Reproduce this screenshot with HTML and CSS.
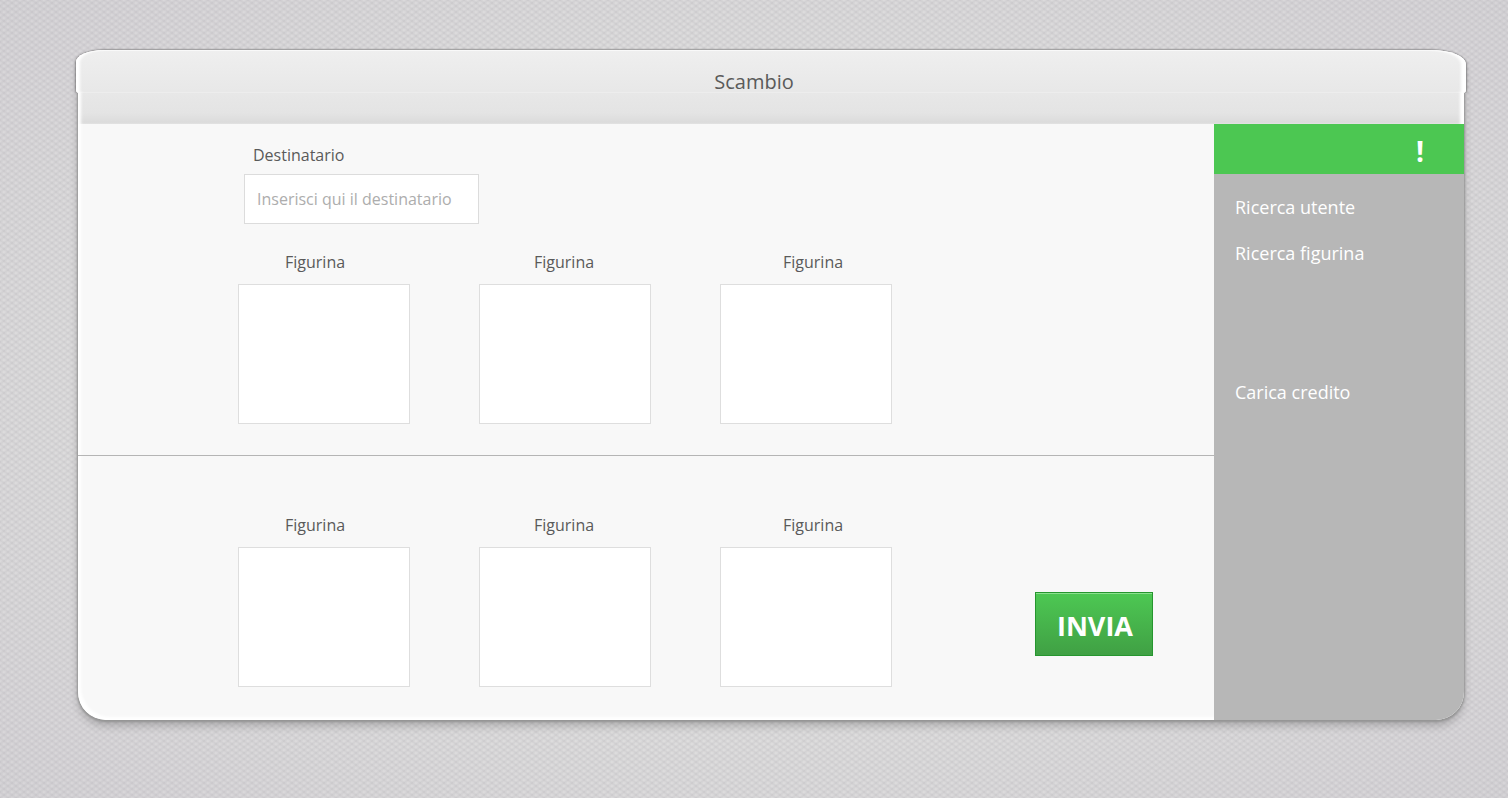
FILE: index.html
```html
<!DOCTYPE html>
<html lang="it">
<head>
<meta charset="utf-8">
<title>Scambio</title>
<link rel="stylesheet" href="styles.css">
</head>
<body>
<div class="panel">
  <header class="panel-header"><h1 class="title">Scambio</h1></header>
  <div class="panel-body">
    <form class="content">
      <section class="offer">
        <div class="recipient">
          <label class="recipient-label" for="destinatario">Destinatario</label>
          <input class="recipient-input" id="destinatario" type="text" placeholder="Inserisci qui il destinatario">
        </div>
        <div class="captions">
          <span class="caption" id="o1">Figurina</span>
          <span class="caption" id="o2">Figurina</span>
          <span class="caption" id="o3">Figurina</span>
        </div>
        <div class="slots">
          <div class="slot" role="group" aria-labelledby="o1"></div>
          <div class="slot" role="group" aria-labelledby="o2"></div>
          <div class="slot" role="group" aria-labelledby="o3"></div>
        </div>
      </section>
      <section class="request">
        <div class="captions">
          <span class="caption" id="r1">Figurina</span>
          <span class="caption" id="r2">Figurina</span>
          <span class="caption" id="r3">Figurina</span>
        </div>
        <div class="slots">
          <div class="slot" role="group" aria-labelledby="r1"></div>
          <div class="slot" role="group" aria-labelledby="r2"></div>
          <div class="slot" role="group" aria-labelledby="r3"></div>
          <button class="send" type="submit">INVIA</button>
        </div>
      </section>
    </form>
    <aside class="sidebar">
      <div class="alert"><button class="alert-button" type="button">!</button></div>
      <nav class="menu">
        <a class="menu-link" href="#utente">Ricerca utente</a>
        <a class="menu-link" href="#figurina">Ricerca figurina</a>
        <a class="menu-link menu-link-credit" href="#credito">Carica credito</a>
      </nav>
    </aside>
  </div>
</div>
</body>
</html>
```

FILE: styles.css
```css
* { box-sizing: border-box; }

body {
  margin: 0;
  min-height: 100vh;
  display: flex;
  padding: 50px 44px 78px 78px;
  font-family: "Open Sans", "Noto Sans", sans-serif;
  font-size: 16px;
  line-height: 24px;
  color: #5a5a5a;
  background:
    radial-gradient(ellipse 4px 3px at 50% 50%, rgba(130, 126, 135, .26), transparent) 0 0 / 8px 6px,
    radial-gradient(ellipse 4px 3px at 50% 50%, rgba(130, 126, 135, .26), transparent) 4px 3px / 8px 6px,
    radial-gradient(ellipse at center, #e7e7e5 0, #e5e5e4 50%, #dcdadd 100%);
}

.panel {
  flex: 1;
  display: flex;
  flex-direction: column;
  border-radius: 28px 36px 28px 28px / 12px 14px 28px 28px;
  box-shadow: 0 1px 2px 1px #959595, 0 6px 8px rgba(0, 0, 0, .2);
}

.panel-header {
  position: relative;
  z-index: 0;
  height: 74px;
  padding-top: 18px;
  text-align: center;
  border-radius: 28px 36px 0 0 / 12px 14px 0 0;
  background: linear-gradient(#efefef, #e4e4e4 85%, #dadada);
  box-shadow: inset 4px 1px 3px -1px #fff, inset -5px 0 3px -1px #fff;
}

/* Raised lip that overhangs the panel on both sides */
.panel-header::before {
  content: "";
  position: absolute;
  z-index: -1;
  inset: 0 -2px auto;
  height: 43px;
  border-radius: 28px 36px 3px 3px / 12px 14px 3px 3px;
  background: linear-gradient(#efefef, #e4e4e4 85%, #dadada) 0 0 / 100% 74px;
  box-shadow: inset 5px 0 3px -1px #fff, inset -6px 0 3px -1px #fff, inset 0 1px #f8f8f8, -1px 0 2px rgba(0, 0, 0, .3), 1px 0 2px rgba(0, 0, 0, .3);
  clip-path: inset(-2px -4px 0);
}

.title {
  margin: 0;
  padding-right: 34px;
  font-size: 20px;
  font-weight: 400;
  line-height: 28px;
}

.panel-body {
  flex: 1;
  display: flex;
  border-radius: 0 0 28px 28px;
  overflow: hidden;
  background: #f8f8f8;
}

.content {
  flex: 1;
  display: flex;
  flex-direction: column;
  border-bottom-left-radius: 28px;
  box-shadow: inset 4px -4px 3px -1px #fff;
}

.offer {
  padding: 19px 0 31px;
  border-bottom: 1px solid #b5b5b5;
}

.recipient {
  display: flex;
  flex-direction: column;
  align-items: flex-start;
  gap: 7px;
  padding-left: 166px;
  margin-bottom: 26px;
}

.recipient-label { padding-left: 9px; }

.recipient-input {
  width: 235px;
  height: 50px;
  padding: 0 12px;
  border: 1px solid #dcdcdc;
  background: #fff;
  font: inherit;
  color: #5a5a5a;
}

.recipient-input::placeholder { color: #adadad; }

.captions {
  display: flex;
  padding-left: 207px;
  margin-bottom: 10px;
}

.caption { width: 249px; }

.slots {
  display: flex;
  gap: 69px;
  padding: 0 61px 0 160px;
}

.slot {
  width: 172px;
  height: 140px;
  border: 1px solid #dedede;
  background: #fff;
}

.request { padding: 57px 0 32px; }

.send {
  align-self: flex-end;
  width: 118px;
  height: 64px;
  margin: 0 0 31px auto;
  padding: 2px 0 0 2px;
  border: 1px solid #26962f;
  background: linear-gradient(#4dc853, #40a044);
  box-shadow: inset 0 1px #8ce08f;
  color: #fff;
  font: 700 27px "Open Sans", sans-serif;
}

.sidebar {
  width: 250px;
  background: #b7b7b7;
  color: #fff;
}

.alert {
  display: flex;
  justify-content: flex-end;
  align-items: center;
  height: 50px;
  padding-right: 36px;
  background: #4cc752;
}

.alert-button {
  padding: 4px 4px 0;
  border: 0;
  background: none;
  color: inherit;
  font: 700 28px "Open Sans", sans-serif;
}

.menu {
  display: flex;
  flex-direction: column;
  gap: 18px;
  padding: 19px 21px;
}

.menu-link {
  color: inherit;
  font-size: 18px;
  line-height: 28px;
  text-decoration: none;
}

.menu-link-credit { margin-top: 93px; }
```
